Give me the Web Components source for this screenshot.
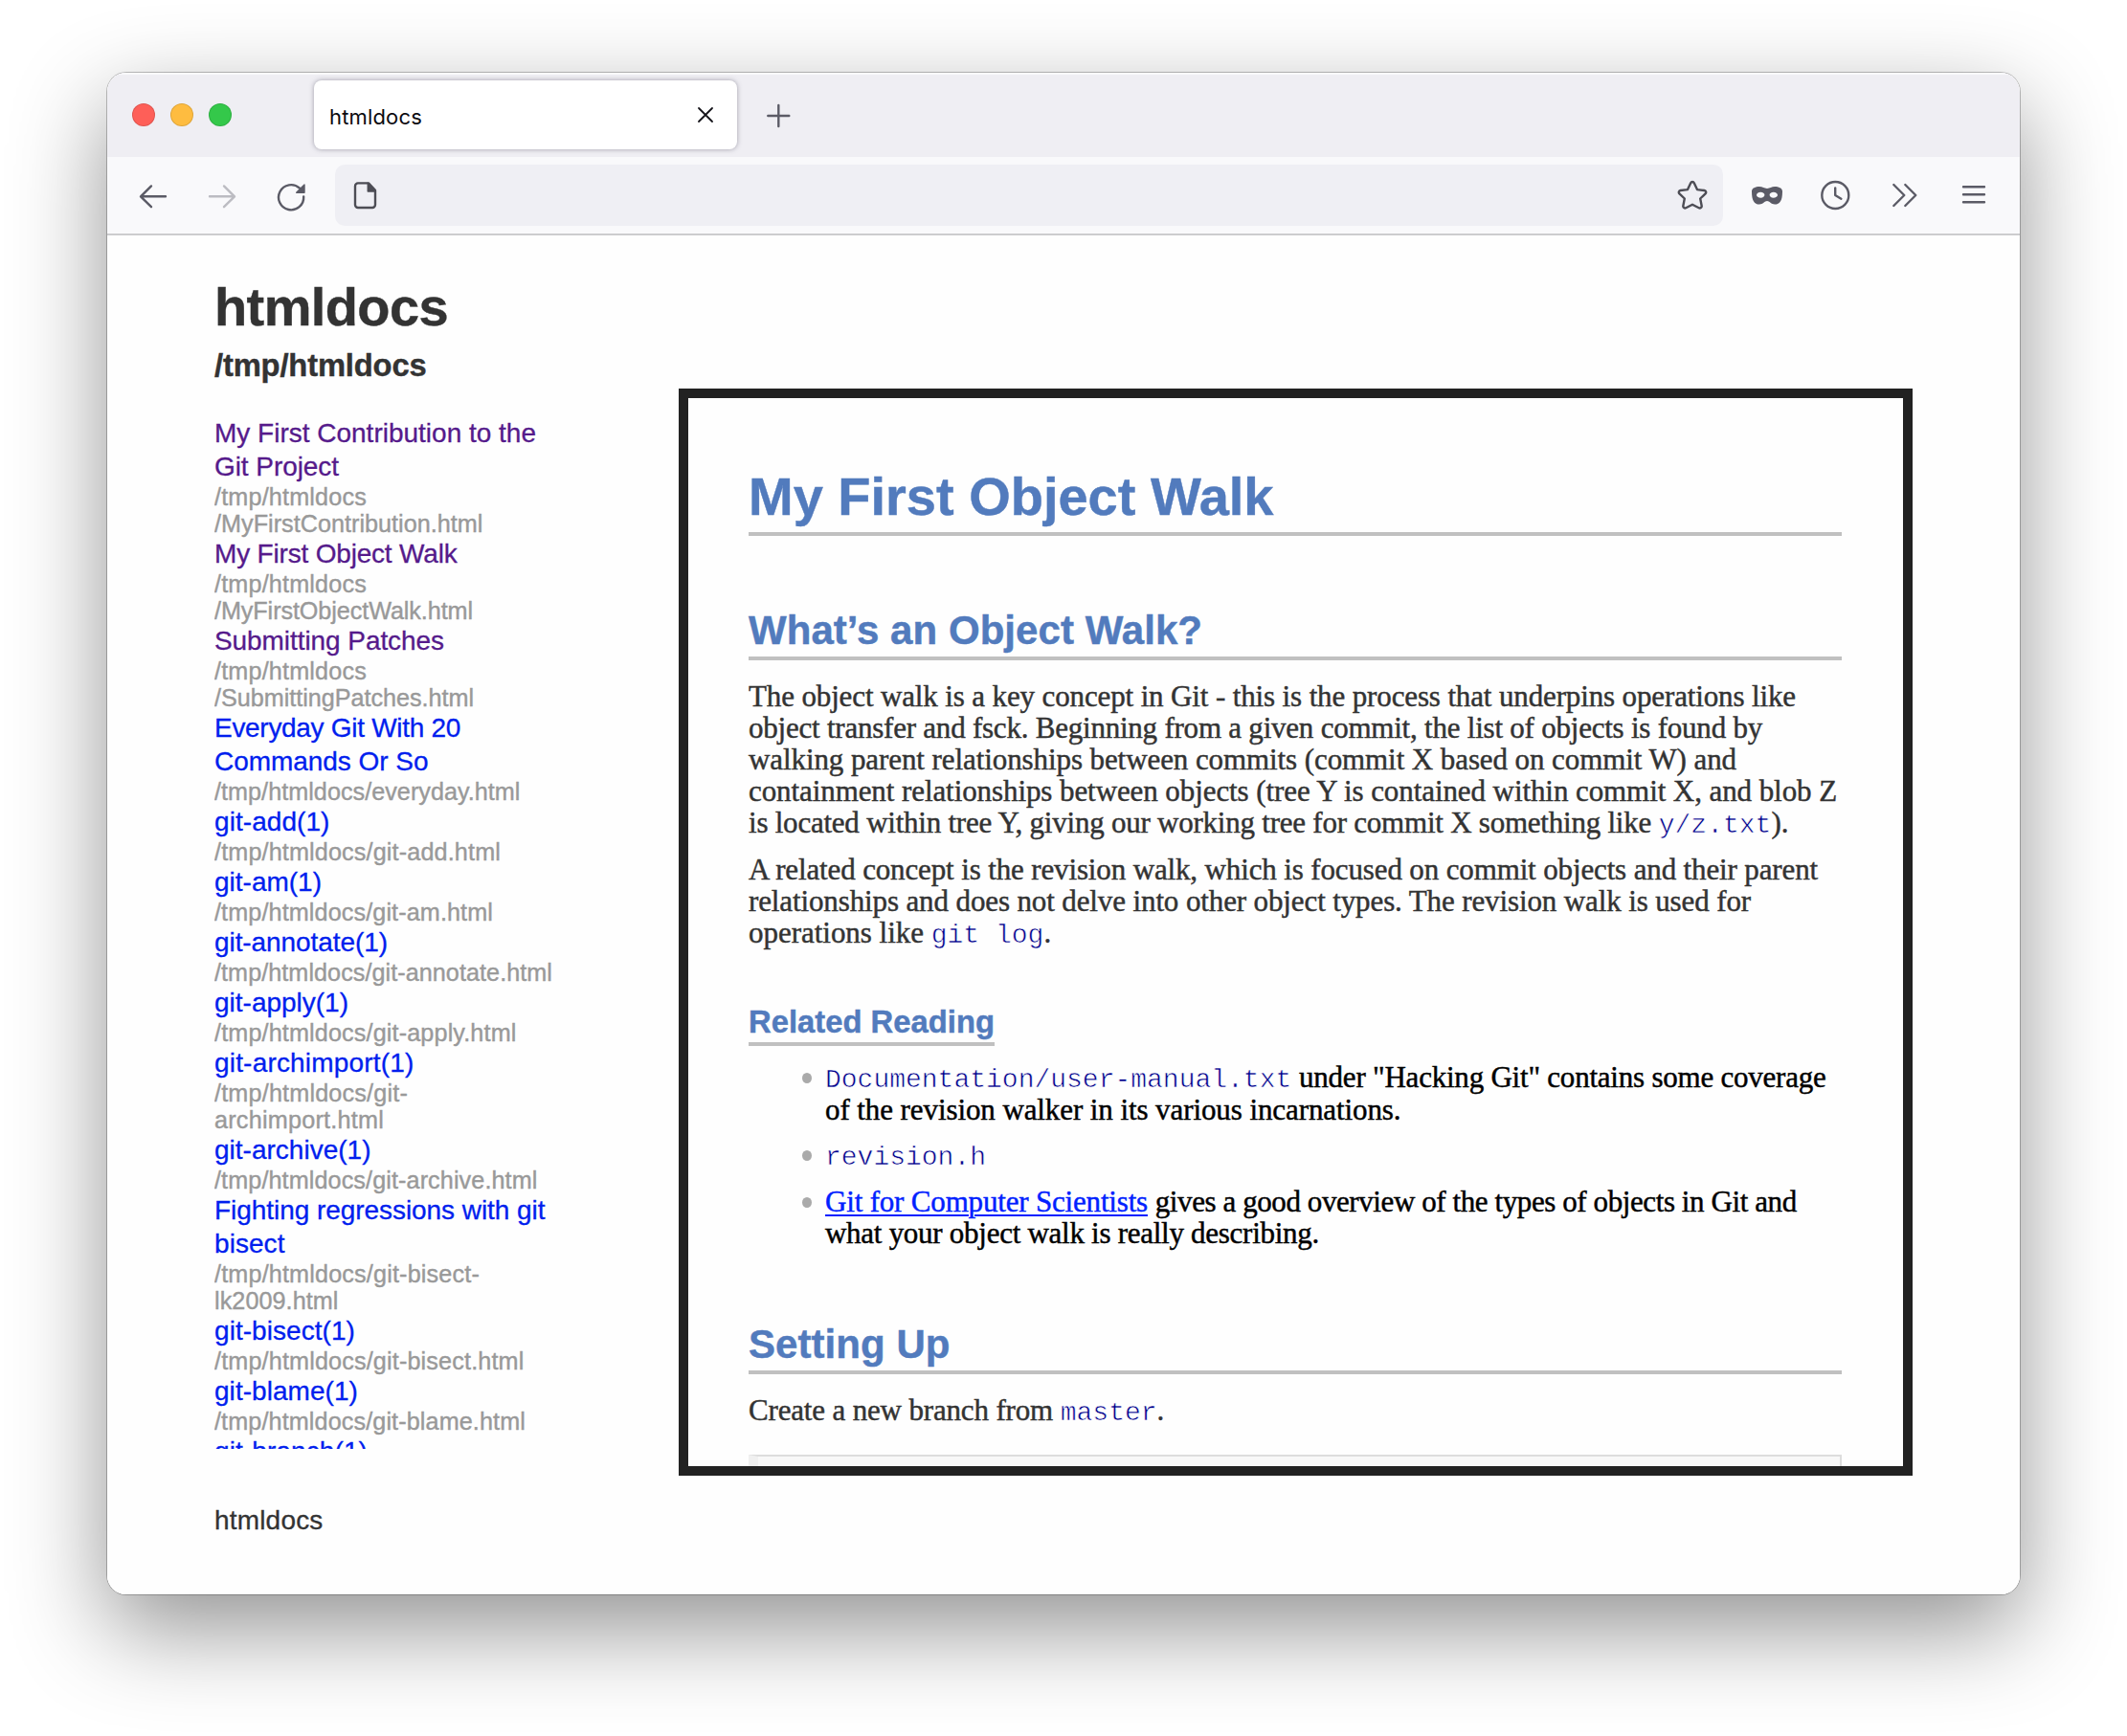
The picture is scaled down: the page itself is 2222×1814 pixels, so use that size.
<!DOCTYPE html>
<html lang="en">
<head>
<meta charset="utf-8">
<title>htmldocs</title>
<style>
html, body { margin: 0; background: #fff; }
body { width: 2222px; height: 1814px; overflow: hidden; font-family: "Liberation Sans", Arial, sans-serif; }
</style>
</head>
<body>
<browser-window>
  <tab-strip slot="tabs"><fit-text w="97">htmldocs</fit-text></tab-strip>
  <nav-toolbar slot="toolbar"></nav-toolbar>
  <docs-page slot="page"></docs-page>
</browser-window>

<script>
class Base extends HTMLElement {
  connectedCallback() {
    if (this.shadowRoot) return;
    this.attachShadow({ mode: 'open' }).innerHTML = this.view();
  }
}

class BrowserWindow extends Base {
  view() {
    return `<style>
      :host { display: block; padding: 76px 112px 148px; }
      .win { width: 1998px; height: 1590px; border-radius: 20px; overflow: hidden; background: #fff; display: flex; flex-direction: column; }
      .shade { border-radius: 20px; box-shadow: 0 36px 98px rgba(0,0,0,.43), 0 0 0 1px rgba(0,0,0,.24); }
    </style>
    <div class="shade"><div class="win"><slot name="tabs"></slot><slot name="toolbar"></slot><slot name="page"></slot></div></div>`;
  }
}

class TabStrip extends Base {
  view() {
    return `<style>
      :host { display: flex; align-items: center; height: 88px; box-sizing: border-box; padding-left: 26px; background: #efeef3; box-shadow: inset 0 2px 1px #fafafc; flex: none; }
      .lights { display: flex; gap: 16px; width: 190px; }
      .lights i { width: 24px; height: 24px; border-radius: 50%; box-sizing: border-box; border: 1px solid rgba(0,0,0,.12); }
      .tab { display: flex; align-items: center; justify-content: space-between; width: 442px; height: 72px; padding: 0 21px 0 16px; box-sizing: border-box; background: #fff; border-radius: 8px; box-shadow: 0 0 5px rgba(80,78,95,.5); font: 22px/32px Inter, sans-serif; color: #0c0b10; }
      .tab span { padding-top: 3px; }
      svg { display: block; }
      .plus { margin-left: 29px; }
    </style>
    <div class="lights"><i style="background:#fe5f58"></i><i style="background:#febc40"></i><i style="background:#34c84a"></i></div>
    <div class="tab"><span><slot></slot></span>
      <svg width="24" height="24" viewBox="0 0 24 24" fill="none" stroke="#15141a" stroke-width="1.8" stroke-linecap="round"><path d="M5 5l14 14M19 5L5 19"/></svg></div>
    <svg class="plus" width="28" height="28" viewBox="0 0 28 28" fill="none" stroke="#5b5b66" stroke-width="2.4" stroke-linecap="round"><path d="M14.300 4v22M3.300 15h22"/></svg>`;
  }
}

const ICONS = {
  back: '<path d="M29 17.3H3.5M14 6.4L3 17.3l11 10.9"/>',
  forward: '<path d="M3 17.3h25.500M18 6.400l11 10.900-11 10.900"/>',
  reload: '<path d="M29.200 17.500A13.100 13.100 0 1 1 25 8.600"/><path d="M30 5v8.300h-8.300z" fill="currentColor" stroke-width="1.400" stroke-linejoin="round"/>',
  page: '<path d="M8 3.400h11l7 7.500V26a3 3 0 0 1-3 3H8a3 3 0 0 1-3-3V6.400a3 3 0 0 1 3-3z"/><path d="M18.300 3.400v8.500h7.700z" fill="currentColor" stroke-width="1.500"/>',
  star: '<path stroke-linejoin="round" d="M14.200 3.200a2 2 0 0 1 3.600 0l3.200 6.900 7.500.900a2 2 0 0 1 1.100 3.400L24.200 19.500l1.500 7.700a2 2 0 0 1-2.900 2L16 25.700l-6.800 3.500a2 2 0 0 1-2.900-2l1.500-7.700-5.400-5.100a2 2 0 0 1 1.100-3.400l7.500-.9z"/>',
  mask: '<path fill="currentColor" stroke="none" fill-rule="evenodd" d="M0 12C0 8.400 4 7 8 7c3.300 0 5 1.900 8 1.900S20.700 7 24 7c4 0 8 1.400 8 5 0 9.500-2.500 13.600-8 13.600-3.600 0-5.600-3.500-8-3.500s-4.400 3.500-8 3.500c-5.500 0-8-4.100-8-13.600zM9.300 12.800c-2.500 0-4.300 1.600-4.300 3 0 1.600 2 2.900 4.400 2.900s4-1.400 4-2.900c0-1.600-1.700-3-4.100-3zm13.400 0c-2.400 0-4.100 1.400-4.100 3 0 1.500 1.600 2.900 4 2.900s4.400-1.300 4.400-2.900c0-1.400-1.800-3-4.300-3z"/>',
  clock: '<circle cx="15.300" cy="16" r="14"/><path d="M15.200 8.500V16l6.200 3.700"/>',
  more: '<path d="M4.300 5l11 11-11 11M16.300 5l11 11-11 11"/>',
  menu: '<path d="M5 7.300h22M5 15.300h22M5 23.300h22"/>'
};

class ToolIcon extends Base {
  view() {
    return `<style>
      :host { display: block; width: 32px; height: 32px; color: #5b5b66; flex: none; }
      :host([dim]) { color: #bcbcc2; }
      :host([dark]) { color: #4d4d55; }
      svg { display: block; overflow: visible; }
    </style>
    <svg width="32" height="32" viewBox="0 0 32 32" fill="none" stroke="currentColor" stroke-width="2.400" stroke-linecap="round" stroke-linejoin="round">${ICONS[this.getAttribute('name')]}</svg>`;
  }
}

class NavToolbar extends Base {
  view() {
    return `<style>
      :host { display: flex; align-items: center; height: 82px; box-sizing: border-box; padding: 0 32px; background: #f9f9fb; border-bottom: 2px solid #ccccce; flex: none; }
      .nav, .tools { display: flex; gap: 40px; }
      .url { display: flex; align-items: center; justify-content: space-between; flex: 1; height: 64px; margin: 0 30px; padding: 0 16px; box-sizing: border-box; background: #efeff4; border-radius: 10px; }
    </style>
    <div class="nav"><tool-icon name="back"></tool-icon><tool-icon name="forward" dim></tool-icon><tool-icon name="reload"></tool-icon></div>
    <div class="url"><tool-icon name="page" dark></tool-icon><tool-icon name="star" dark></tool-icon></div>
    <div class="tools"><tool-icon name="mask"></tool-icon><tool-icon name="clock"></tool-icon><tool-icon name="more"></tool-icon><tool-icon name="menu"></tool-icon></div>`;
  }
}

class DocEntry extends Base {
  view() {
    return `<style>
      :host { display: block; }
      a { display: block; font-size: 28px; line-height: 35px; color: #001eee; white-space: nowrap; -webkit-text-stroke: .3px; }
      :host([visited]) a { color: #551a8b; }
      div { font-size: 25.2px; line-height: 28px; color: #999; white-space: nowrap; -webkit-text-stroke: .4px; }
    </style>
    <a><slot></slot></a><div><slot name="path"></slot></div>`;
  }
}

/* [title lines, path lines, visited]; a line is [text, advance width]. */
const ENTRIES = [
  [[['My First Contribution to the', 336], ['Git Project', 130]], [['/tmp/htmldocs', 159], ['/MyFirstContribution.html', 280.5]], 1],
  [[['My First Object Walk', 253.5]], [['/tmp/htmldocs', 159], ['/MyFirstObjectWalk.html', 270]], 1],
  [[['Submitting Patches', 240]], [['/tmp/htmldocs', 159], ['/SubmittingPatches.html', 271]], 1],
  [[['Everyday Git With 20', 257], ['Commands Or So', 223.5]], [['/tmp/htmldocs/everyday.html', 319.5]]],
  [[['git-add(1)', 120.5]], [['/tmp/htmldocs/git-add.html', 299]]],
  [[['git-am(1)', 112]], [['/tmp/htmldocs/git-am.html', 291]]],
  [[['git-annotate(1)', 181]], [['/tmp/htmldocs/git-annotate.html', 353]]],
  [[['git-apply(1)', 140]], [['/tmp/htmldocs/git-apply.html', 315.5]]],
  [[['git-archimport(1)', 208.5]], [['/tmp/htmldocs/git-', 202], ['archimport.html', 177]]],
  [[['git-archive(1)', 163.5]], [['/tmp/htmldocs/git-archive.html', 337.5]]],
  [[['Fighting regressions with git', 345.5], ['bisect', 73.5]], [['/tmp/htmldocs/git-bisect-', 277], ['lk2009.html', 129.5]]],
  [[['git-bisect(1)', 147]], [['/tmp/htmldocs/git-bisect.html', 323.5]]],
  [[['git-blame(1)', 150]], [['/tmp/htmldocs/git-blame.html', 325]]],
  [[['git-branch(1)', 160]], []]
];
const lines = list => list.map(([t, w]) => `<fit-text w="${w}">${t}</fit-text>`).join('<br>');

class DocsPage extends Base {
  view() {
    return `<style>
      :host { display: flex; flex: 1; color: #333; background: #fefefe; }
      .side { width: 485px; padding: 43px 0 0 112px; display: flex; flex-direction: column; flex: none; }
      h1, h2 { margin: 0; white-space: nowrap; -webkit-text-stroke: .4px; }
      h1 { font-size: 56px; line-height: 64px; }
      h2 { font-size: 32.76px; line-height: 37px; margin: 10px 0 35px; }
      .list { height: 1079px; overflow: hidden; }
      .foot { margin-top: 57px; font-size: 28px; line-height: 35px; -webkit-text-stroke: .3px; }
    </style>
    <div class="side">
      <h1><fit-text w="244">htmldocs</fit-text></h1>
      <h2><fit-text w="221.500">/tmp/htmldocs</fit-text></h2>
      <div class="list">${ENTRIES.map(([t, p, v]) => `<doc-entry${v ? ' visited' : ''}>${lines(t)}<span slot="path">${lines(p)}</span></doc-entry>`).join('')}</div>
      <div class="foot"><fit-text w="113.500">htmldocs</fit-text></div>
    </div>
    <doc-frame></doc-frame>`;
  }
}

class DocFrame extends Base {
  view() {
    return `<style>
      :host { display: block; width: 1289px; height: 1136px; margin-top: 160px; box-sizing: border-box; border: 10px solid #222; padding: 71px 64px 0 63px; overflow: hidden; background: #fefefe; font: 31px/33px "Liberation Serif", serif; -webkit-text-stroke: .45px; flex: none; }
      h1, h2, h3 { margin: 0; font-family: "Liberation Sans", sans-serif; color: #527bbd; border-bottom: 4px solid silver; white-space: nowrap; }
      h1 { font-size: 56px; line-height: 64px; padding-bottom: 5px; }
      h2 { font-size: 42px; line-height: 50px; padding-bottom: 2px; margin-top: 74px; }
      h3 { font-size: 32.76px; line-height: 38px; padding-bottom: 2px; margin-top: 58px; width: 257px; }
      p { margin: 21px 0 0; white-space: nowrap; }
      p + p { margin-top: 16px; }
      p > span, li > span { display: block; height: 33px; }
      ul { list-style: none; margin: 16px 0 0; padding: 0 0 0 80px; color: #000; }
      li { display: grid; grid-template-columns: 1fr; white-space: nowrap; }
      li.tall > span { height: 34px; line-height: 34px; }
      li::before { content: ""; grid-row: 1; grid-column: 1; width: 10px; height: 11px; border-radius: 50%; background: #aaa; margin: 12px 0 0 -24px; }
      li > span:first-of-type { grid-row: 1; grid-column: 1; }
      li + li { margin-top: 13px; }
      li + li:last-child { margin-top: 15px; }
      code { font: 28px/1px "Liberation Mono", monospace; color: #00008b; -webkit-text-stroke: .6px #fefefe; }
      a { color: #0020ff; text-decoration: underline; text-decoration-thickness: 2px; text-underline-offset: 3px; }
      .pre { margin-top: 30px; height: 80px; box-sizing: border-box; border: 2px solid #ddd; border-left: 10px solid #f0f0f0; background: #f8f8f8; }
    </style>
    <h1><fit-text w="548.500">My First Object Walk</fit-text></h1>
    <h2><fit-text w="474">What’s an Object Walk?</fit-text></h2>
    <p><span><fit-text w="1094">The object walk is a key concept in Git - this is the process that underpins operations like</fit-text></span>
      <span><fit-text w="1059">object transfer and fsck. Beginning from a given commit, the list of objects is found by</fit-text></span>
      <span><fit-text w="1032">walking parent relationships between commits (commit X based on commit W) and</fit-text></span>
      <span><fit-text w="1137">containment relationships between objects (tree Y is contained within commit X, and blob Z</fit-text></span>
      <span><fit-text w="943">is located within tree Y, giving our working tree for commit X something like</fit-text> <code>y/z.txt</code>).</span></p>
    <p><span><fit-text w="1117">A related concept is the revision walk, which is focused on commit objects and their parent</fit-text></span>
      <span><fit-text w="1047">relationships and does not delve into other object types. The revision walk is used for</fit-text></span>
      <span><fit-text w="183">operations like</fit-text> <code>git log</code>.</span></p>
    <h3><fit-text w="257">Related Reading</fit-text></h3>
    <ul>
      <li class="tall"><span><code>Documentation/user-manual.txt</code> <fit-text w="550.500">under "Hacking Git" contains some coverage</fit-text></span>
        <span><fit-text w="601.500">of the revision walker in its various incarnations.</fit-text></span></li>
      <li class="tall"><span><code>revision.h</code></span></li>
      <li><span><a><fit-text w="337">Git for Computer Scientists</fit-text></a> <fit-text w="670">gives a good overview of the types of objects in Git and</fit-text></span>
        <span><fit-text w="516">what your object walk is really describing.</fit-text></span></li>
    </ul>
    <h2 style="margin-top:75px"><fit-text w="210.500">Setting Up</fit-text></h2>
    <p><span><fit-text w="318">Create a new branch from</fit-text> <code>master</code>.</span></p>
    <div class="pre"></div>`;
  }
}

/* Spreads a single line of text over a set advance width. */
class FitText extends Base {
  view() { return `<style>:host { display: inline; white-space: nowrap; }</style><slot></slot>`; }
  connectedCallback() {
    super.connectedCallback();
    const w = +this.getAttribute('w');
    const now = this.getBoundingClientRect().width;
    if (now) this.style.letterSpacing = ((w - now) / this.textContent.length) + 'px';
  }
}

customElements.define('browser-window', BrowserWindow);
customElements.define('tab-strip', TabStrip);
customElements.define('tool-icon', ToolIcon);
customElements.define('nav-toolbar', NavToolbar);
customElements.define('doc-entry', DocEntry);
customElements.define('docs-page', DocsPage);
customElements.define('doc-frame', DocFrame);
customElements.define('fit-text', FitText);
</script>
</body>
</html>
